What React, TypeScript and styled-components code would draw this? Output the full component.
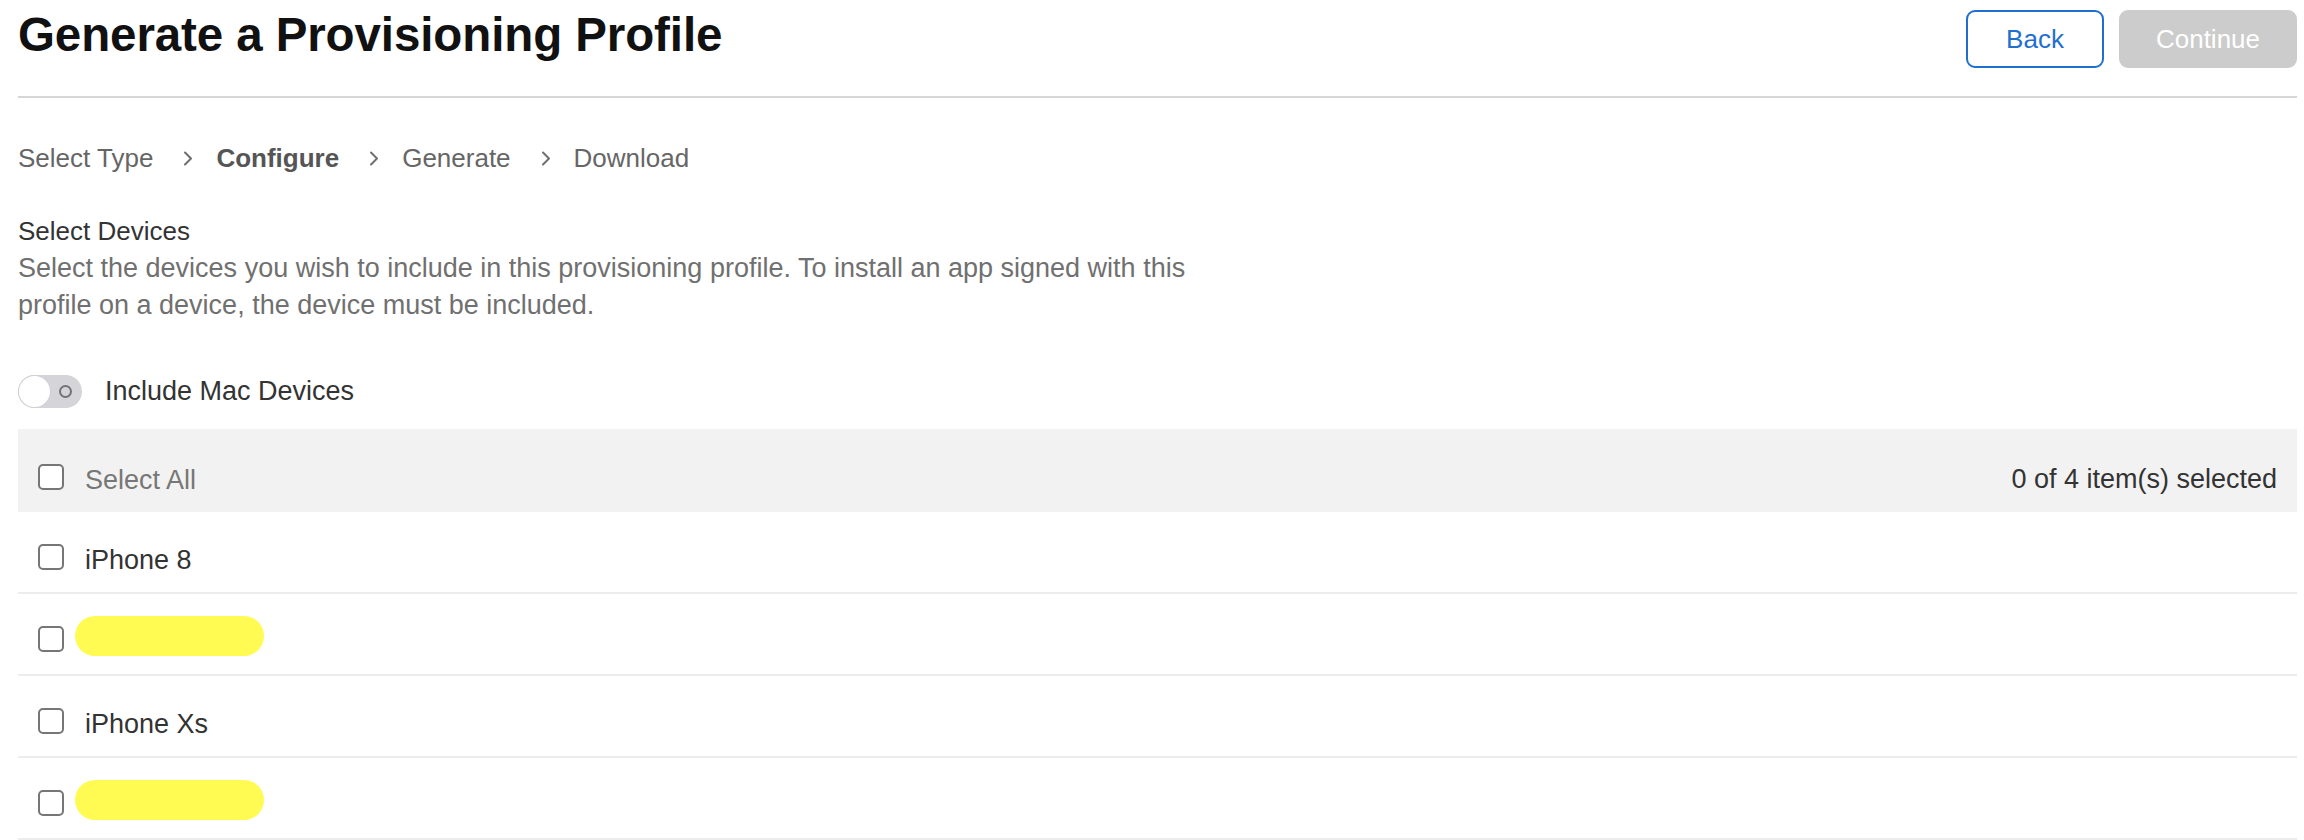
import React from 'react';
import styled, { createGlobalStyle } from 'styled-components';

const GlobalStyle = createGlobalStyle`
  html, body {
    margin: 0;
    padding: 0;
    background: #ffffff;
  }
  body {
    font-family: 'Liberation Sans', Arial, Helvetica, sans-serif;
    color: #333333;
    -webkit-font-smoothing: antialiased;
  }
`;

const Page = styled.div`
  padding: 0 7px 0 18px;
  height: 840px;
  overflow: hidden;
  box-sizing: border-box;
`;

const Header = styled.header`
  display: flex;
  justify-content: space-between;
  align-items: flex-start;
  padding-bottom: 28px;
  border-bottom: 2px solid #d6d6d6;
`;

const Title = styled.h1`
  margin: 7px 0 0 0;
  font-size: 47.5px;
  line-height: 56px;
  font-weight: 700;
  color: #111111;
  letter-spacing: -0.1px;
`;

const Actions = styled.div`
  display: flex;
  gap: 15px;
  margin-top: 10px;
`;

const Button = styled.button<{ $variant: 'outline' | 'disabled' }>`
  box-sizing: border-box;
  height: 58px;
  min-width: ${({ $variant }) => ($variant === 'outline' ? '138px' : '178px')};
  padding: 0 24px;
  border-radius: 9px;
  font-family: inherit;
  font-size: 26px;
  cursor: ${({ $variant }) => ($variant === 'outline' ? 'pointer' : 'default')};
  border: 2px solid ${({ $variant }) => ($variant === 'outline' ? '#1f6fd0' : '#cccccc')};
  background: ${({ $variant }) => ($variant === 'outline' ? '#ffffff' : '#cccccc')};
  color: ${({ $variant }) => ($variant === 'outline' ? '#1f6fd0' : '#ffffff')};
`;

const Breadcrumb = styled.nav`
  display: flex;
  align-items: center;
  margin-top: 42px;
  font-size: 26px;
  line-height: 37px;
  color: #666666;
`;

const Crumb = styled.span<{ $active?: boolean }>`
  font-weight: ${({ $active }) => ($active ? 700 : 400)};
  color: ${({ $active }) => ($active ? '#555555' : '#666666')};
`;

const CrumbSep = styled.svg`
  width: 10px;
  height: 15px;
  margin: 0 23px 0 30px;
  flex-shrink: 0;
`;

const Section = styled.section`
  margin-top: 36px;
  max-width: 1210px;
  font-size: 27px;
  line-height: 37px;
`;

const SectionTitle = styled.div`
  color: #333333;
  font-size: 26px;
`;

const SectionText = styled.p`
  margin: 0;
  color: #707070;
`;

const ToggleRow = styled.label`
  display: flex;
  align-items: center;
  gap: 23px;
  margin-top: 51px;
  font-size: 27px;
  color: #333333;
`;

const Track = styled.span`
  position: relative;
  display: inline-block;
  width: 64px;
  height: 33px;
  border-radius: 17px;
  background: #d4d4d9;
  flex-shrink: 0;
`;

const Knob = styled.span`
  position: absolute;
  left: 1px;
  top: 1px;
  width: 31px;
  height: 31px;
  border-radius: 50%;
  background: #ffffff;
  box-shadow: 0 0 0 1px #d0d0d5;
`;

const OffRing = styled.span`
  position: absolute;
  right: 10px;
  top: 10px;
  width: 9px;
  height: 9px;
  border-radius: 50%;
  border: 2px solid #737373;
`;

const Table = styled.div`
  margin-top: 21px;
  font-size: 27px;
`;

const TableHead = styled.div`
  display: flex;
  align-items: center;
  justify-content: space-between;
  height: 83px;
  box-sizing: border-box;
  padding: 35px 20px 22px 20px;
  background: #f2f2f2;
`;

const Cell = styled.div`
  display: flex;
  align-items: center;
  gap: 21px;
  height: 26px;
`;

const Row = styled.div`
  display: flex;
  align-items: center;
  gap: 21px;
  height: 82px;
  box-sizing: border-box;
  padding: 32px 20px 22px 20px;
  border-bottom: 2px solid #ececec;
`;

const Checkbox = styled.input.attrs({ type: 'checkbox' })`
  appearance: none;
  -webkit-appearance: none;
  margin: 0;
  width: 26px;
  height: 26px;
  box-sizing: border-box;
  border: 2px solid #767676;
  border-radius: 5px;
  background: #ffffff;
  flex-shrink: 0;
`;

const Label = styled.span<{ $muted?: boolean }>`
  color: ${({ $muted }) => ($muted ? '#777777' : '#333333')};
  line-height: 26px;
  padding-top: 5px;
`;

const Redacted = styled.span`
  display: inline-block;
  width: 189px;
  height: 40px;
  margin: 0 0 6px -10px;
  border-radius: 20px;
  background: #fffb52;
  flex-shrink: 0;
`;

const Count = styled.span`
  color: #333333;
  padding-top: 4px;
`;

const Chevron = () => (
  <CrumbSep viewBox="0 0 10 15" fill="none">
    <path d="M2 1.5 L8 7.5 L2 13.5" stroke="#6e6e6e" strokeWidth="2" strokeLinecap="round" strokeLinejoin="round" />
  </CrumbSep>
);

const steps = [
  { name: 'Select Type' },
  { name: 'Configure', active: true },
  { name: 'Generate' },
  { name: 'Download' },
];

const devices: { name?: string }[] = [{ name: 'iPhone 8' }, {}, { name: 'iPhone Xs' }, {}];

export default function App() {
  return (
    <>
      <GlobalStyle />
      <Page>
        <Header>
          <Title>Generate a Provisioning Profile</Title>
          <Actions>
            <Button $variant="outline">Back</Button>
            <Button $variant="disabled" disabled>
              Continue
            </Button>
          </Actions>
        </Header>

        <Breadcrumb>
          {steps.map((s, i) => (
            <React.Fragment key={s.name}>
              {i > 0 && <Chevron />}
              <Crumb $active={s.active}>{s.name}</Crumb>
            </React.Fragment>
          ))}
        </Breadcrumb>

        <Section>
          <SectionTitle>Select Devices</SectionTitle>
          <SectionText>
            Select the devices you wish to include in this provisioning profile. To install an app signed with this
            profile on a device, the device must be included.
          </SectionText>
        </Section>

        <ToggleRow>
          <Track>
            <Knob />
            <OffRing />
          </Track>
          Include Mac Devices
        </ToggleRow>

        <Table>
          <TableHead>
            <Cell>
              <Checkbox />
              <Label $muted>Select All</Label>
            </Cell>
            <Count>0 of 4 item(s) selected</Count>
          </TableHead>
          {devices.map((d, i) => (
            <Row key={i}>
              <Checkbox />
              {d.name ? <Label>{d.name}</Label> : <Redacted />}
            </Row>
          ))}
        </Table>
      </Page>
    </>
  );
}
